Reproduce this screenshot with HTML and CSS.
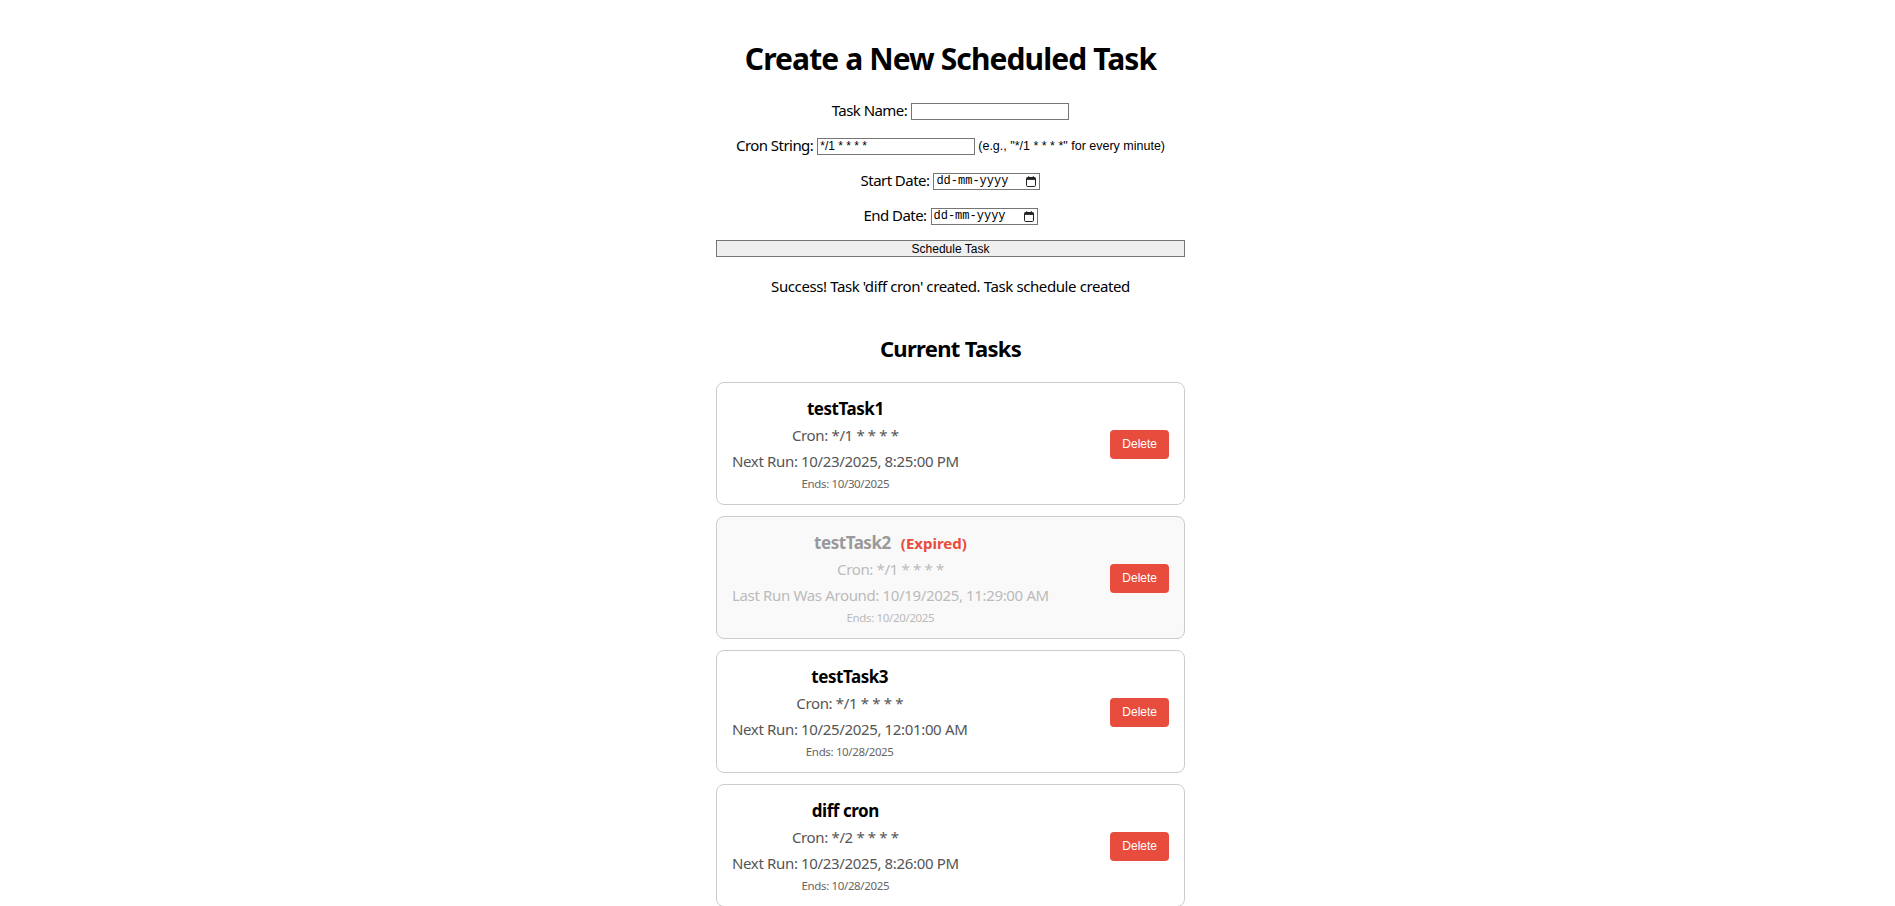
FILE: index.html
```html
<!DOCTYPE html>
<html lang="en">
<head>
<meta charset="utf-8">
<title>Scheduled Tasks</title>
<link rel="stylesheet" href="styles.css">
</head>
<body>
<main class="page">
  <h1 class="title">Create a New Scheduled Task</h1>
  <form class="task-form">
    <div class="form-row">
      <label for="task-name">Task Name:</label>
      <input id="task-name" class="text-input" type="text">
    </div>
    <div class="form-row">
      <label for="cron">Cron String:</label>
      <input id="cron" class="text-input" type="text" value="*/1 * * * *">
      <small class="hint">(e.g., "*/1 * * * *" for every minute)</small>
    </div>
    <div class="form-row">
      <label>Start Date:</label>
      <span class="date-input start">
        <span class="date-text">dd-mm-yyyy</span>
        <svg class="cal-icon" width="10" height="11" viewBox="0 0 10 11"><rect x="0.5" y="1.5" width="9" height="9" rx="1.2" fill="none" stroke="#222"/><rect x="0.5" y="1.5" width="9" height="2.4" fill="#222"/><rect x="2" y="0.3" width="1.2" height="2" fill="#222"/><rect x="6.8" y="0.3" width="1.2" height="2" fill="#222"/></svg>
      </span>
    </div>
    <div class="form-row">
      <label>End Date:</label>
      <span class="date-input end">
        <span class="date-text">dd-mm-yyyy</span>
        <svg class="cal-icon" width="10" height="11" viewBox="0 0 10 11"><rect x="0.5" y="1.5" width="9" height="9" rx="1.2" fill="none" stroke="#222"/><rect x="0.5" y="1.5" width="9" height="2.4" fill="#222"/><rect x="2" y="0.3" width="1.2" height="2" fill="#222"/><rect x="6.8" y="0.3" width="1.2" height="2" fill="#222"/></svg>
      </span>
    </div>
    <button type="button" class="submit">Schedule Task</button>
  </form>
  <p class="message">Success! Task 'diff cron' created. Task schedule created</p>
  <h2 class="section-title">Current Tasks</h2>
  <ul class="task-list">
    <li class="task-card">
      <div class="task-info">
        <h3 class="task-name">testTask1</h3>
        <p class="task-line">Cron: */1 * * * *</p>
        <p class="task-line">Next Run: 10/23/2025, 8:25:00 PM</p>
        <p class="task-ends">Ends: 10/30/2025</p>
      </div>
      <button type="button" class="delete-btn">Delete</button>
    </li>
    <li class="task-card expired">
      <div class="task-info">
        <h3 class="task-name">testTask2<span class="expired-tag">(Expired)</span></h3>
        <p class="task-line">Cron: */1 * * * *</p>
        <p class="task-line">Last Run Was Around: 10/19/2025, 11:29:00 AM</p>
        <p class="task-ends">Ends: 10/20/2025</p>
      </div>
      <button type="button" class="delete-btn">Delete</button>
    </li>
    <li class="task-card">
      <div class="task-info">
        <h3 class="task-name">testTask3</h3>
        <p class="task-line">Cron: */1 * * * *</p>
        <p class="task-line">Next Run: 10/25/2025, 12:01:00 AM</p>
        <p class="task-ends">Ends: 10/28/2025</p>
      </div>
      <button type="button" class="delete-btn">Delete</button>
    </li>
    <li class="task-card">
      <div class="task-info">
        <h3 class="task-name">diff cron</h3>
        <p class="task-line">Cron: */2 * * * *</p>
        <p class="task-line">Next Run: 10/23/2025, 8:26:00 PM</p>
        <p class="task-ends">Ends: 10/28/2025</p>
      </div>
      <button type="button" class="delete-btn">Delete</button>
    </li>
  </ul>
</main>
</body>
</html>
```
FILE: styles.css
```css
html, body {
  background: #fff;
}
body {
  margin: 8px 8px 8px 14px;
  font-family: "Noto Sans", "Open Sans", sans-serif;
  font-size: 15px;
  color: #000;
}
.page {
  width: 469px;
  margin: 0 auto;
  padding-top: 31px;
}
.title {
  margin: 0;
  font-size: 30px;
  line-height: 40px;
  letter-spacing: -0.9px;
  font-weight: 700;
  text-align: center;
}
.task-form {
  margin-top: 21px;
  display: flex;
  flex-direction: column;
  gap: 13px;
}
.form-row {
  height: 22px;
  display: flex;
  justify-content: center;
  align-items: center;
  white-space: nowrap;
}
.form-row label {
  margin-right: 4px;
  padding-bottom: 3px;
  letter-spacing: -0.55px;
}
.text-input {
  box-sizing: border-box;
  width: 158px;
  height: 17px;
  margin: 0;
  padding: 0 2px;
  border: 1px solid #767676;
  border-radius: 0;
  font-family: "Liberation Sans", Arial, sans-serif;
  font-size: 12px;
  color: #000;
  background: #fff;
}
.hint {
  margin-left: 3px;
  font-family: "Liberation Sans", Arial, sans-serif;
  font-size: 12.5px;
}
.date-input {
  box-sizing: border-box;
  width: 107px;
  height: 17px;
  display: flex;
  align-items: center;
  justify-content: space-between;
  padding: 0 3px 0 2px;
  border: 1px solid #767676;
  background: #fff;
}
.date-text {
  font-family: "Liberation Mono", monospace;
  font-size: 12px;
  color: #000;
}
.cal-icon {
  display: block;
}
.submit {
  box-sizing: border-box;
  width: 100%;
  height: 17px;
  margin: 0;
  padding: 0;
  border: 1px solid #767676;
  border-radius: 0;
  background: #efefef;
  font-family: "Liberation Sans", Arial, sans-serif;
  font-size: 12px;
  color: #000;
}
.message {
  margin: 18px 0 0;
  font-size: 15px;
  line-height: 22px;
  letter-spacing: -0.4px;
  text-align: center;
}
.section-title {
  margin: 36px 0 0;
  font-size: 22px;
  line-height: 30px;
  letter-spacing: -0.7px;
  font-weight: 700;
  text-align: center;
}
.task-list {
  list-style: none;
  margin: 19px 0 0;
  padding: 0;
}
.task-card {
  box-sizing: border-box;
  display: flex;
  justify-content: space-between;
  align-items: center;
  padding: 12px 15px 11px;
  margin-bottom: 11px;
  border: 1px solid #ccc;
  border-radius: 8px;
  background: #fff;
}
.task-info {
  text-align: center;
}
.task-name {
  margin: 0;
  font-size: 17px;
  line-height: 28px;
  letter-spacing: -0.45px;
  font-weight: 700;
  color: #000;
}
.task-line {
  margin: 0;
  font-size: 15px;
  line-height: 25.5px;
  letter-spacing: -0.35px;
  color: #555;
}
.task-ends {
  margin: 0;
  font-size: 11.5px;
  line-height: 19px;
  letter-spacing: -0.35px;
  color: #666;
}
.task-card.expired {
  background: #f9f9f9;
}
.expired .task-name {
  color: #999;
}
.expired .task-line,
.expired .task-ends {
  color: #bbb;
}
.expired-tag {
  margin-left: 10px;
  font-size: 15px;
  letter-spacing: 0;
  color: #e74c3c;
}
.delete-btn {
  padding: 7px 12px;
  border: none;
  border-radius: 4px;
  background: #e74c3c;
  color: #fff;
  font-family: "Liberation Sans", Arial, sans-serif;
  font-size: 12px;
  line-height: 15px;
}
```
